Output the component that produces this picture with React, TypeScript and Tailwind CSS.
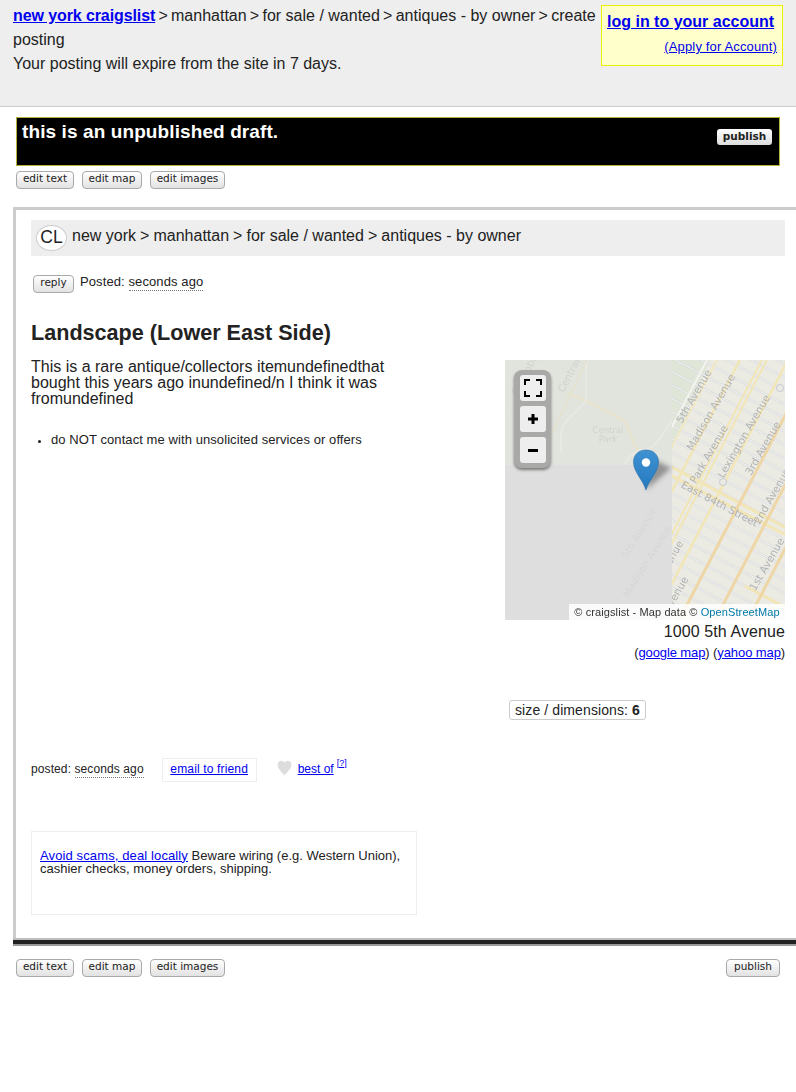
import React from "react"

const sans = "font-['Liberation_Sans',Arial,sans-serif]"

function Btn({ children, className = "" }: { children: React.ReactNode; className?: string }) {
  return (
    <span
      className={`inline-flex h-[18px] items-center justify-center rounded-[4px] border border-[#a9a9a9] bg-gradient-to-b from-white to-[#e2e2e2] font-['DejaVu_Sans',sans-serif] text-[10.5px] leading-none text-[#222] pb-[3px] ${className}`}
    >
      {children}
    </span>
  )
}

function EditButtons() {
  return (
    <div className="flex gap-[8px]">
      <Btn className="w-[58px]">edit text</Btn>
      <Btn className="w-[60px]">edit map</Btn>
      <Btn className="w-[75px]">edit images</Btn>
    </div>
  )
}

function Sep({ className }: { className: string }) {
  return <span className={className}>{" > "}</span>
}

// avenues of the right hand map tile, x at y=130 of the svg
const avenues = [
  { x: 142, c: "#f1e7c0", w: 2 },
  { x: 165, c: "#f2e5b6", w: 2.5 },
  { x: 187, c: "#f2e5b6", w: 2 },
  { x: 192, c: "#f2e5b6", w: 2 },
  { x: 213, c: "#f2e5b6", w: 2.5 },
  { x: 239, c: "#efd6a6", w: 3 },
  { x: 275, c: "#efd6a6", w: 3 },
  { x: 308, c: "#efd6a6", w: 3 },
]
const streets = Array.from({ length: 34 }, (_, i) => i * 13.5 - 100)

function MapArt() {
  return (
    <svg viewBox="0 0 280 260" className="block h-[260px] w-[280px]">
      <defs>
        <clipPath id="tileRight">
          <rect x="167" y="0" width="113" height="260" />
        </clipPath>
        <clipPath id="tileTop">
          <rect x="0" y="0" width="167" height="105" />
        </clipPath>
        <linearGradient id="pinFill" x1="0" y1="0" x2="0" y2="1">
          <stop offset="0" stopColor="#3f93d3" />
          <stop offset="1" stopColor="#2478bd" />
        </linearGradient>
        <filter id="pinBlur">
          <feGaussianBlur stdDeviation="2.5" />
        </filter>
        <filter id="tileBlur">
          <feGaussianBlur stdDeviation="0.4" />
        </filter>
      </defs>
      <rect width="280" height="260" fill="#dedede" />
      <g clipPath="url(#tileTop)">
        <g filter="url(#tileBlur)">
          <rect width="167" height="105" fill="#e1e4dd" />
          <path d="M0 20 L70 58 M18 0 L70 20 M0 50 L45 90" stroke="#e6e6e1" strokeWidth="1" fill="none" />
          <path d="M62 33 C85 42 100 50 118 60 C126 66 124 80 133 90" stroke="#e7e3cd" strokeWidth="2.5" fill="none" />
          <path d="M82 0 C78 20 84 35 80 42 C70 55 58 60 56 72 L56 92 M120 105 C122 96 132 90 145 88 C155 82 160 70 167 60" stroke="#e9eae7" strokeWidth="1.5" fill="none" />
          <path d="M32 105 L82 0" stroke="#e4e2d1" strokeWidth="2" fill="none" />
          <text x="103" y="73" textAnchor="middle" fontFamily="DejaVu Sans" fontSize="8.5" fill="#cfd3cc">Central</text>
          <text x="103" y="82" textAnchor="middle" fontFamily="DejaVu Sans" fontSize="8.5" fill="#cfd3cc">Park</text>
          <text transform="translate(67 17) rotate(-62)" textAnchor="middle" fontFamily="DejaVu Sans" fontSize="10" fill="#d0d3ce">Central</text>
          <text transform="translate(24 14) rotate(-62)" textAnchor="middle" fontFamily="DejaVu Sans" fontSize="10" fill="#d0d3ce">Columbus</text>
        </g>
      </g>
      <g fontFamily="DejaVu Sans" fontSize="10" fill="#d6d6d6" textAnchor="middle" filter="url(#tileBlur)">
        <text transform="translate(137 175) rotate(-58)">5th Avenue</text>
        <text transform="translate(145 203) rotate(-58)">Madison Avenue</text>
      </g>
      <g clipPath="url(#tileRight)">
        <g filter="url(#tileBlur)">
          <rect x="167" width="113" height="260" fill="#ebebe3" />
          <path d="M167 0 H205 L165 90 Z" fill="#dfe6d8" />
          {streets.map((y) => (
            <g key={y}>
              <line x1="160" y1={y} x2="290" y2={y + 69} stroke="#d6d8da" strokeWidth="2" />
              <line x1="160" y1={y} x2="290" y2={y + 69} stroke="#f5f5f4" strokeWidth="1" />
            </g>
          ))}
          <line x1="202" y1="0" x2="160" y2="80" stroke="#f3f3f0" strokeWidth="2" />
          <line x1="165" y1="106" x2="285" y2="170" stroke="#f2e5b6" strokeWidth="3" />
          <line x1="165" y1="115" x2="285" y2="177" stroke="#f2e5b6" strokeWidth="3" />
          <line x1="240" y1="226" x2="285" y2="250" stroke="#f2e5b6" strokeWidth="3" />
          {avenues.map((a) => (
            <line key={a.x} x1={a.x + 75} y1={-10} x2={a.x - 70} y2={270} stroke={a.c} strokeWidth={a.w} />
          ))}
          <circle cx="275" cy="28" r="3.5" fill="#ebebe3" stroke="#c5cad0" strokeWidth="1" />
          <circle cx="218" cy="122" r="3.5" fill="#ebebe3" stroke="#c5cad0" strokeWidth="1" />
          <g fontFamily="DejaVu Sans" fontSize="10.5" fill="#b2b4b4" textAnchor="middle">
            <text transform="translate(192 38) rotate(-60)">5th Avenue</text>
            <text transform="translate(209 54) rotate(-60)">Madison Avenue</text>
            <text transform="translate(207 96) rotate(-60)">Park Avenue</text>
            <text transform="translate(242 78) rotate(-60)">Lexington Avenue</text>
            <text transform="translate(261 90) rotate(-60)">3rd Avenue</text>
            <text transform="translate(213 147) rotate(28)">East 84th Street</text>
            <text transform="translate(270 138) rotate(-60)">2nd Avenue</text>
            <text transform="translate(265 206) rotate(-60)">1st Avenue</text>
            <text transform="translate(174 236) rotate(-60)">Avenue</text>
            <text transform="translate(169 200) rotate(-60)">Avenue</text>
          </g>
        </g>
      </g>
      {/* marker */}
      <path d="M141 130 L150 100 L166 108 Z" fill="#444" opacity="0.5" filter="url(#pinBlur)" />
      <path
        d="M141 130 C138 120 128.5 112 128.5 102 C128.5 94.5 134 90 141 90 C148 90 153.5 94.5 153.5 102 C153.5 112 144 120 141 130 Z"
        fill="url(#pinFill)"
        stroke="#2a6fa8"
        strokeWidth="0.6"
      />
      <circle cx="141" cy="102.5" r="4.2" fill="#fff" />
    </svg>
  )
}

function MapControls() {
  return (
    <div className="absolute left-[9px] top-[10px] flex w-[37px] flex-col gap-[5px] rounded-[8px] bg-[#a9a9a7] px-[5.5px] py-[5px] shadow-[0_2px_3px_rgba(0,0,0,0.45)]">
      <div className="flex h-[26px] w-[26px] items-center justify-center rounded-[3px] bg-[#eeeeee]">
        <svg width="18" height="18" viewBox="0 0 18 18" fill="none" stroke="#000" strokeWidth="2">
          <path d="M1 6V1H6M12 1H17V6M17 12V17H12M6 17H1V12" />
        </svg>
      </div>
      <div className="flex h-[26px] w-[26px] items-center justify-center rounded-[3px] bg-[#eeeeee]">
        <svg width="10" height="10" viewBox="0 0 10 10" fill="#000">
          <path d="M3.5 0H6.5V3.5H10V6.5H6.5V10H3.5V6.5H0V3.5H3.5Z" />
        </svg>
      </div>
      <div className="flex h-[26px] w-[26px] items-center justify-center rounded-[3px] bg-[#eeeeee]">
        <svg width="10" height="3" viewBox="0 0 10 3" fill="#000">
          <rect width="10" height="3" />
        </svg>
      </div>
    </div>
  )
}

export default function App() {
  const headSep = "[word-spacing:-1.2px]"
  const crumbSep = "[word-spacing:-0.4px]"
  return (
    <div className={`${sans} h-[1092px] w-[796px] overflow-hidden bg-white text-[16px] text-[#222]`}>
      {/* top bar */}
      <div className="flex h-[107px] items-start justify-between border-b border-[#cccccc] bg-[#eeeeee] pl-[13px] pr-[13px]">
        <div className="w-[586px] pt-[4px] leading-[24px]">
          <div>
            <a href="#" className="font-bold tracking-[-0.1px] text-[#0000ee] underline">new york craigslist</a>
            <Sep className={headSep} />manhattan<Sep className={headSep} />for sale / wanted<Sep className={headSep} />antiques - by owner<Sep className={headSep} />create posting
          </div>
          <div>Your posting will expire from the site in 7 days.</div>
        </div>
        <div className="mt-[5px] h-[61px] w-[182px] border border-[#eeee00] bg-[#ffffcc] pl-[5px] pr-[5px] pt-[6px]">
          <a href="#" className="block text-[16px] font-bold leading-[20px] text-[#0000ee] underline">log in to your account</a>
          <div className="mt-[7px] text-right text-[13px] leading-[16px] tracking-[0.15px]">
            <a href="#" className="text-[#0000ee] underline">(Apply for Account)</a>
          </div>
        </div>
      </div>

      {/* draft banner */}
      <div className="ml-[16px] mt-[10px] flex h-[49px] w-[764px] items-start justify-between border border-[#b5b23a] bg-black pl-[5px] pr-[7px]">
        <div className="pt-[3px] text-[19px] font-bold leading-[22px] tracking-[0.1px] text-white">this is an unpublished draft.</div>
        <span className="mt-[11px] inline-flex h-[16px] w-[55px] items-center justify-center rounded-[3px] bg-gradient-to-b from-white to-[#dddddd] pb-[2px] font-['DejaVu_Sans',sans-serif] text-[10.5px] font-bold leading-none text-[#222]">publish</span>
      </div>
      <div className="ml-[16px] mt-[5px]">
        <EditButtons />
      </div>

      {/* posting frame */}
      <div className="ml-[13px] mt-[18px] h-[731px] w-[800px] border-l-[3px] border-t-[3px] border-[#cccccc]">
        <div className="pl-[15px]">
          <div className="mt-[10px] flex h-[36px] w-[754px] items-start bg-[#eeeeee] pl-[5px] text-[16px]">
            <span className="mt-[5px] flex h-[26px] w-[31px] items-center justify-center rounded-[50%] border border-[#cccccc] bg-white text-[17.5px] leading-none">CL</span>
            <span className="ml-[5px] mt-[6px] leading-[20px]">
              new york<Sep className={crumbSep} />manhattan<Sep className={crumbSep} />for sale / wanted<Sep className={crumbSep} />antiques - by owner
            </span>
          </div>

          <div className="ml-[2px] mt-[19px] flex h-[18px] items-center text-[13px]">
            <Btn className="w-[41px]">reply</Btn>
            <span className="ml-[6px] -mt-[4px] tracking-[0.1px]">
              Posted: <span className="border-b border-dotted border-[#777] pb-[1px]">seconds ago</span>
            </span>
          </div>

          <h1 className="mt-[26px] text-[21.6px] font-bold leading-[28px]">Landscape (Lower East Side)</h1>

          <div className="mt-[13px] flex w-[754px] items-start justify-between">
            <div className="w-[390px]">
              <p className="-mt-[1px] text-[16px] leading-[16px]">
                This is a rare antique/collectors itemundefinedthat bought this years ago inundefined/n I think it was fromundefined
              </p>
              <ul className="mt-[25px] list-disc pl-[20px] text-[13px] leading-[16px] tracking-[0.08px] marker:text-[11px]">
                <li>do NOT contact me with unsolicited services or offers</li>
              </ul>
            </div>
            <div className="w-[280px]">
              <div className="relative h-[260px] w-[280px]">
                <MapArt />
                <MapControls />
                <div className="absolute bottom-0 right-0 flex h-[16px] w-[216px] items-center justify-center bg-[rgba(255,255,255,0.85)] text-[11px] tracking-[0.1px] text-[#333]">
                  © craigslist - Map data ©&nbsp;<span className="text-[#0078a8]">OpenStreetMap</span>
                </div>
              </div>
              <div className="mt-[2px] text-right leading-[20px] tracking-[0.1px]">1000 5th Avenue</div>
              <div className="mt-[3px] text-right text-[13px] leading-[16px] tracking-[-0.1px]">
                (<a href="#" className="text-[#0000ee] underline">google map</a>) (<a href="#" className="text-[#0000ee] underline">yahoo map</a>)
              </div>
              <div className="ml-[4px] mt-[39px] inline-flex h-[20px] items-center rounded-[3px] border border-[#cccccc] px-[5px] text-[14px] tracking-[0.1px]">
                size / dimensions:&nbsp;<b>6</b>
              </div>
            </div>
          </div>

          <div className="mt-[36px] flex h-[24px] items-center text-[12px]">
            <span className="-mt-[1px] tracking-[0.1px]">
              posted: <span className="border-b border-dotted border-[#777] pb-[1px]">seconds ago</span>
            </span>
            <a href="#" className="ml-[18px] flex h-[24px] w-[95px] items-center justify-center border border-[#eeeeee] pb-[1px] tracking-[0.15px] text-[#0000ee] underline">email to friend</a>
            <svg className="ml-[20px] -mt-[4px]" width="15" height="16" viewBox="0 0 24 24" fill="#dddddd" preserveAspectRatio="none">
              <path d="M12 23 C8 18 1 13 1 7 C1 3 4 1 7 1 C9 1 11 2 12 4 C13 2 15 1 17 1 C20 1 23 3 23 7 C23 13 16 18 12 23 Z" />
            </svg>
            <a href="#" className="ml-[6px] -mt-[2px] text-[#0000ee] underline">best of</a>
            <a href="#" className="ml-[3px] -mt-[12px] text-[9px] text-[#0000ee] underline">[?]</a>
          </div>

          <div className="mt-[49px] h-[84px] w-[386px] border border-[#eeeeee] pl-[8px] pt-[17px] text-[13px] leading-[13px]">
            <a href="#" className="tracking-[0.12px] text-[#0000ee] underline">Avoid scams, deal locally</a> Beware wiring (e.g. Western Union), cashier checks, money orders, shipping.
          </div>
        </div>
      </div>
      <div className="ml-[13px] h-[8px] w-[800px] border-b-2 border-t-2 border-b-[#999999] border-t-[#bdbdbd] bg-[#222222]" />

      <div className="ml-[16px] mt-[13px] flex w-[764px] justify-between">
        <EditButtons />
        <Btn className="w-[54px]">publish</Btn>
      </div>
    </div>
  )
}
